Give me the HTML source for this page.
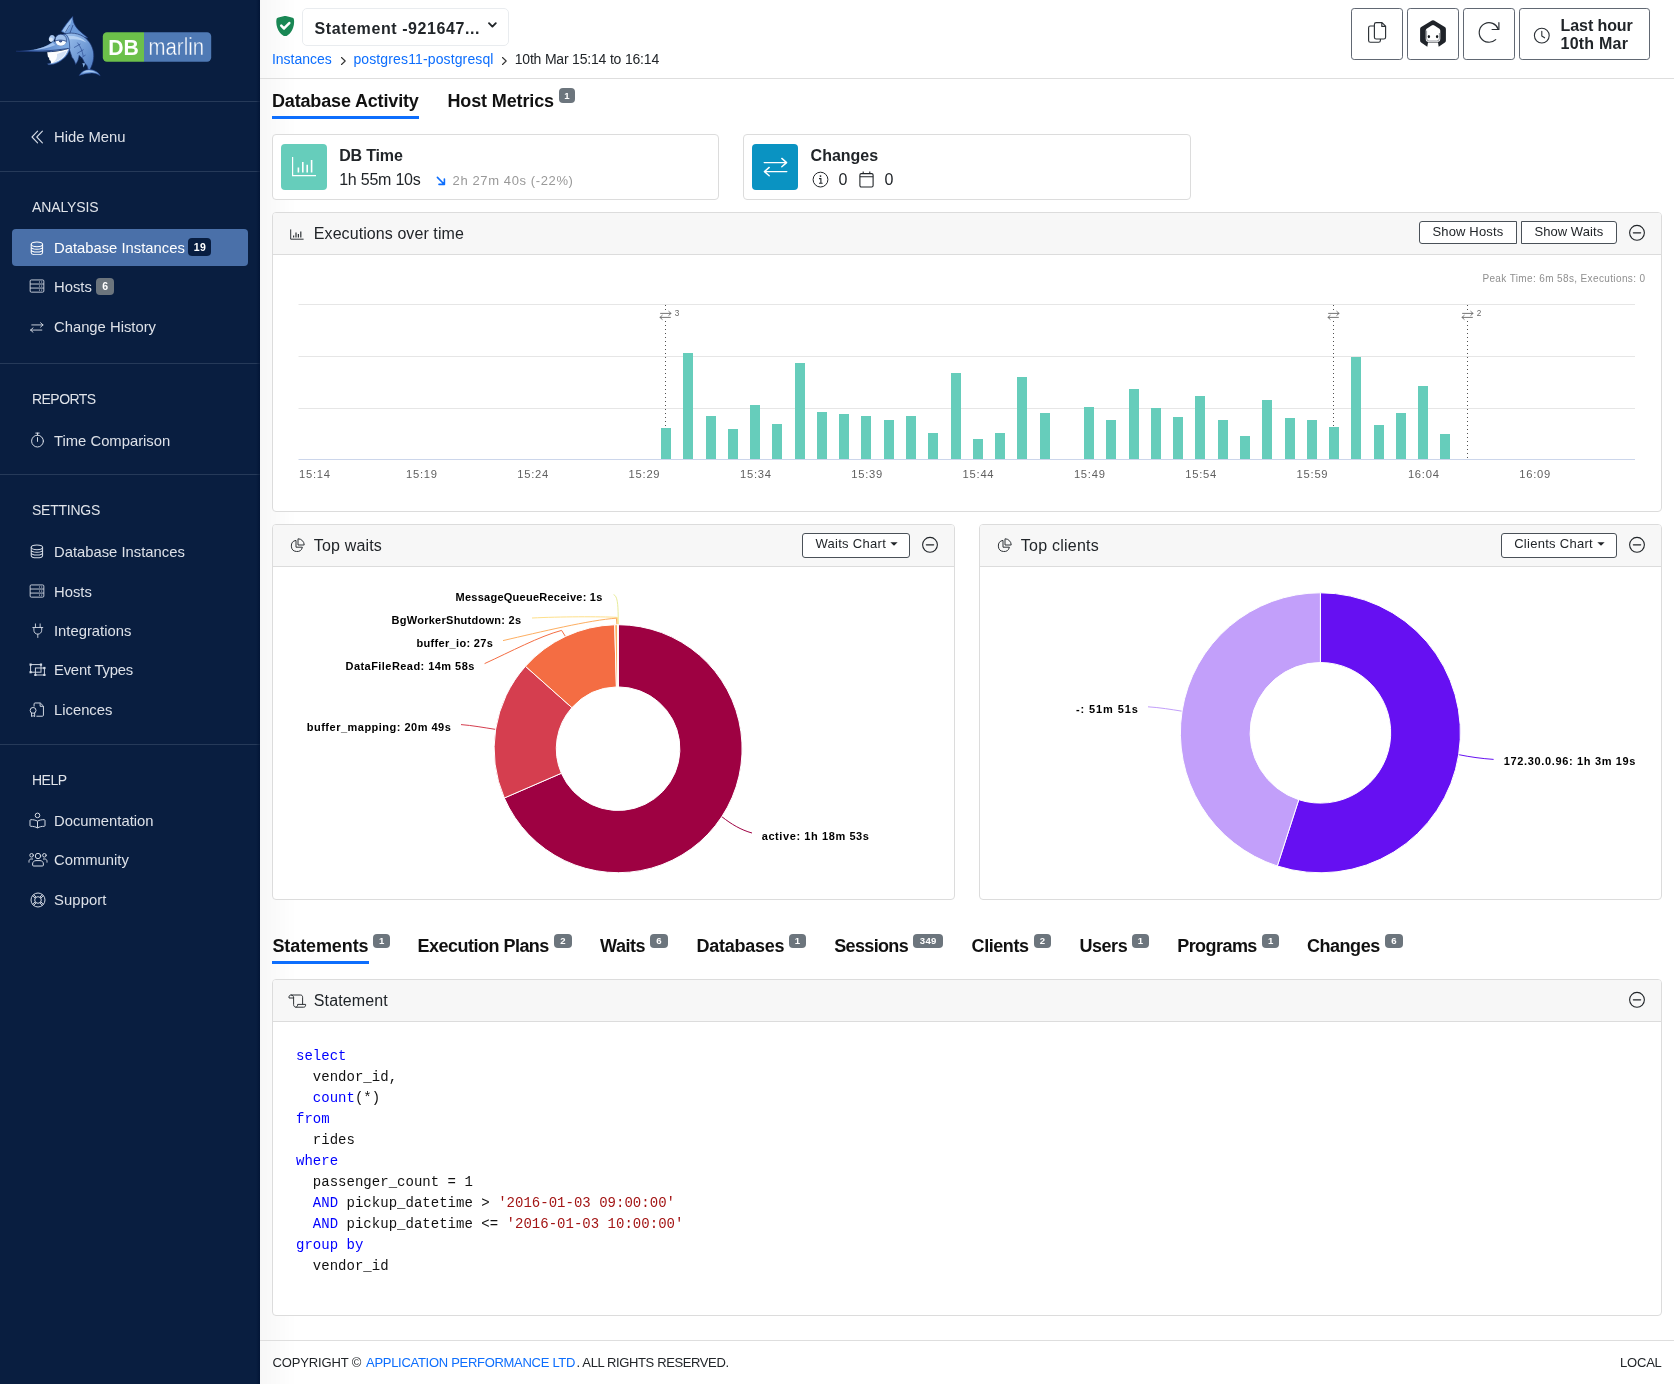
<!DOCTYPE html>
<html lang="en">
<head>
<meta charset="utf-8">
<title>DBmarlin - Statement</title>
<style>
*{box-sizing:border-box;margin:0;padding:0}
html,body{width:1674px;height:1384px;overflow:hidden;background:#fff}
body{font-family:"Liberation Sans",sans-serif;color:#212529;position:relative;-webkit-font-smoothing:antialiased}
.abs{position:absolute}
.t{position:absolute;white-space:nowrap;line-height:1}
/* sidebar */
#side{will-change:transform;position:absolute;left:0;top:0;width:260px;height:1384px;background:#091e40}
.sdiv{position:absolute;left:0;width:260px;height:1px;background:#263a59}
.sh{position:absolute;left:32px;color:#e0e4ea;font-size:14.5px;line-height:1;white-space:nowrap}
.si{position:absolute;left:54px;color:#dde1e8;font-size:15px;line-height:1;white-space:nowrap}
.sic{position:absolute;left:29px;width:17px;height:17px}
.sic svg{display:block;width:100%;height:100%;overflow:visible}
#active{position:absolute;left:12px;top:229px;width:236px;height:37px;background:#4a70a9;border-radius:4px}
.sbadge{position:absolute;height:17px;border-radius:4px;color:#fff;font-size:10.5px;letter-spacing:.4px;text-indent:.4px;font-weight:bold;line-height:17px;text-align:center}
/* main */
#main{will-change:transform;position:absolute;left:0;top:0;width:1674px;height:1384px}
.hline{position:absolute;height:1px;background:#dedede}
.panel{position:absolute;border:1px solid #dcdcdc;border-radius:4px;background:#fff}
.phead{position:absolute;left:0;top:0;right:0;height:42px;background:#f7f7f7;border-bottom:1px solid #dcdcdc;border-radius:3px 3px 0 0}
.ptitle{position:absolute;left:41px;top:13px;font-size:16px;line-height:1;color:#212529;white-space:nowrap}
.btn{position:absolute;border:1px solid #4a5158;border-radius:3px;background:#fff;color:#212529;font-size:13px;line-height:1;text-align:center;white-space:nowrap}
.tab{position:absolute;font-weight:bold;font-size:18px;line-height:1;color:#111;white-space:nowrap}
.badge{position:absolute;height:12px;border-radius:4px;background:#6c757d;color:#fff;font-size:9.6px;letter-spacing:.3px;text-indent:.3px;font-weight:bold;line-height:12px;text-align:center}
.ul{position:absolute;height:3px;background:#0d6efd}
.hbtn{position:absolute;top:8px;height:52px;border:1px solid #616873;border-radius:3.2px;background:#fff}
.ax{position:absolute;font-size:11.2px;color:#5f5f5f;line-height:1;white-space:nowrap;letter-spacing:.75px}
.pl{position:absolute;font-size:11px;font-weight:bold;color:#000;line-height:1;white-space:nowrap;letter-spacing:.35px}
pre{position:absolute;left:296px;top:1045.7px;letter-spacing:.02px;font-family:"Liberation Mono",monospace;font-size:14px;line-height:21px;color:#111}
.k{color:#0000ff}.s{color:#a31515}
</style>
</head>
<body>
<!-- ============ SIDEBAR ============ -->
<div id="side">
  <div class="sdiv" style="top:101px"></div>
  <div class="sdiv" style="top:171px"></div>
  <div class="sdiv" style="top:363px"></div>
  <div class="sdiv" style="top:474px"></div>
  <div class="sdiv" style="top:744px"></div>
  <div class="abs" style="left:256px;top:0;width:4px;height:1384px;background:linear-gradient(to right,rgba(0,20,52,0),rgba(0,18,50,.7))"></div>
  <div id="active"></div>
  <svg class="abs" style="left:0;top:0" width="260" height="100" viewBox="0 0 260 100">
  <defs>
    <linearGradient id="fg" x1="0" y1="0" x2="1" y2="1"><stop offset="0" stop-color="#9dc1ee"/><stop offset="1" stop-color="#4d7cc2"/></linearGradient>
    <linearGradient id="bg1" x1="0" y1="0" x2="1" y2="0"><stop offset="0" stop-color="#1c3478"/><stop offset=".35" stop-color="#4d78bf"/><stop offset="1" stop-color="#86b0e6"/></linearGradient>
  </defs>
  <!-- dorsal fin -->
  <path d="M61 31.5 C64.5 26 68.5 20.5 72.8 16.2 C72.6 21 74.4 25.4 78 29.4 C81.4 32.6 85 35.2 88 38 L70 36 Z" fill="#6c9ad9" stroke="#1a3370" stroke-width=".7" stroke-linejoin="round"/>
  <path d="M62.6 30.6 C65.6 26 68.8 21.6 72 18.4 L69.4 27.6 L65.4 33 Z" fill="#9cc0ee"/>
  <path d="M69.8 24.8 L65.2 32.6 M73 25 L69.8 33.4" stroke="#1a3370" stroke-width=".6" fill="none"/>
  <!-- body -->
  <path d="M65 34 C73 31.6 82.6 34.2 88 40.4 C92.6 45.6 94.4 52.6 93.6 58.6 C93 63.4 91.4 67 90 69.6 L88 69.4 C87.6 66.4 86.6 64.6 84.8 63.4 L82.6 58.8 L79.2 55.4 C78.8 58.8 77.6 62 75.6 64.4 C74.8 61.4 73.6 59 72 57.4 L69 48.4 Z" fill="url(#fg)" stroke="#1a3370" stroke-width=".7" stroke-linejoin="round"/>
  <path d="M68 36.2 C75 35 82.4 37.4 86.6 42.6 C82 40 76 38.8 70 39.4 Z" fill="#b4d0f2"/>
  <path d="M77.4 42.6 C80.4 46.4 82.4 51 83.2 56 M74 47.6 L80.4 44 M77.2 53.4 L83.6 49.6 M80.4 58.4 L85.6 55" stroke="#24418a" stroke-width=".6" fill="none"/>
  <path d="M82.4 63 L83.6 67.4 L85.2 63.6 Z" fill="#86b0e6"/>
  <!-- tail -->
  <path d="M79.2 75.4 C81.6 71.6 85.4 69.4 89.6 69.6 C94.6 69.8 98.6 72.4 100.2 75.8 C97 73.6 93.6 72.8 90.4 73.2 C86.4 73.4 82.6 74.2 79.2 75.4 Z" fill="#6f9dd9" stroke="#24418a" stroke-width=".5" stroke-linejoin="round"/>
  <path d="M82.4 72.8 C84.6 71 87.2 70.2 89.8 70.4 C92.6 70.6 95 71.6 96.8 73 C93.6 71.8 90.6 71.8 87.6 72.2 Z" fill="#a6c6ef"/>
  <!-- head -->
  <path d="M55 41 C57 36.6 61 34 65.4 34.2 C68 35.8 69.6 40.4 69.6 46 C70.6 51 66.6 58 58 62.6 C54.6 64.2 51 65 48.4 64.8 L47.4 63.8 C55 62.6 62.6 57.8 66.6 52.4 L67.8 48.4 L50 52 Z" fill="#7ca8e1" stroke="#1a3370" stroke-width=".6" stroke-linejoin="round"/>
  <!-- bill -->
  <path d="M16 51.2 C24 50.9 34 50.3 42 47.6 C46.4 46 50 43.6 53.6 41 L57.4 44.6 L68.6 48.4 C60 51 40 52.4 16 51.2 Z" fill="url(#bg1)"/>
  <path d="M33 49.8 C40 48.6 46.8 46.4 52.8 42.8 L55.4 45 C48.6 48 41 49.6 33 49.8 Z" fill="#a3c3ee"/>
  <path d="M16 51.2 C34 51.8 52 51.2 68.8 48.4" stroke="#1a3370" stroke-width=".8" fill="none"/>
  <!-- teeth -->
  <path d="M47.2 52.3 C54.6 52.2 62 51 68.4 49 C67 54 63.4 58.4 58 61 C55.6 62.2 53.2 63 51.2 63.4 L50.6 60.8 L49.4 60 L49 57.6 L48 57.2 Z" fill="#fdfeff"/>
  <path d="M57 54 L66.8 50.4 C65.6 53.8 63.4 56.8 60.4 59 C58 60.6 55.4 61.8 53 62.6 C56 60.4 57.6 57.6 57 54 Z" fill="#d4e2f5"/>
  <!-- far eye -->
  <ellipse cx="51.8" cy="38.4" rx="2.8" ry="3.4" fill="#a7c5ee" transform="rotate(24 51.8 38.4)"/>
  <ellipse cx="51" cy="39.6" rx="1.9" ry="2" fill="#dbe8f8" transform="rotate(24 51 39.6)"/>
  <!-- near eye -->
  <circle cx="60.8" cy="39.9" r="5.7" fill="#9fc0ec" stroke="#1a3370" stroke-width=".6"/>
  <path d="M55.4 41.4 C57.6 40.4 64 40.6 66.2 41.8 C65.6 44.4 63.4 45.8 60.8 45.8 C58.2 45.8 56 44.2 55.4 41.4 Z" fill="#fbfdff"/>
  <path d="M55.2 41 C58.6 39.6 63.2 39.8 66.4 41.4" stroke="#1a3370" stroke-width=".7" fill="none"/>
  <ellipse cx="60.6" cy="41.3" rx="1.6" ry="1.1" fill="#22397a"/>
  <circle cx="60.9" cy="41.1" r=".45" fill="#dbe8f8"/>
  <!-- boxes -->
  <path d="M107 32.3 H144 V61.7 H107 A4.2 4.2 0 0 1 102.8 57.5 V36.5 A4.2 4.2 0 0 1 107 32.3 Z" fill="#6cc04a"/>
  <path d="M144 32.3 H207 A4.2 4.2 0 0 1 211.2 36.5 V57.5 A4.2 4.2 0 0 1 207 61.7 H144 Z" fill="#4f7ab5"/>
  <text x="108.2" y="55.2" font-family="Liberation Sans, sans-serif" font-weight="bold" font-size="22.8" fill="#fff" textLength="30.6" lengthAdjust="spacingAndGlyphs">DB</text>
  <text x="148.6" y="55.2" font-family="Liberation Sans, sans-serif" font-size="23.5" fill="#fff" stroke="#4f7ab5" stroke-width=".4" textLength="55.4" lengthAdjust="spacingAndGlyphs">marlin</text>
</svg>

  <!-- Hide Menu -->
<svg class="abs" style="left:31px;top:130px" width="13" height="14" viewBox="0 0 13 14" fill="none" stroke="#d5dbe5" stroke-width="1.1" stroke-linecap="round" stroke-linejoin="round"><path d="M6.6 1.2 L1 7 L6.6 12.8 M11.4 1.2 L5.8 7 L11.4 12.8"/></svg>
<div class="si" style="top:130.1px;font-size:14.8px">Hide Menu</div>
<div class="sh" style="top:200.4px;font-size:14px;letter-spacing:-.13px">ANALYSIS</div>
<!-- Database Instances (active) -->
<svg class="abs" style="left:30.4px;top:240.6px" width="13.8" height="14.7" viewBox="0 0 15 16" fill="none" stroke="#fff" stroke-width="1.1"><ellipse cx="7.5" cy="3.6" rx="6.2" ry="2.6"/><path d="M1.3 3.6 V12.4 C1.3 13.9 4.1 15 7.5 15 C10.9 15 13.7 13.9 13.7 12.4 V3.6 M1.3 6.6 C1.3 8 4.1 9.1 7.5 9.1 C10.9 9.1 13.7 8 13.7 6.6 M1.3 9.5 C1.3 10.9 4.1 12 7.5 12 C10.9 12 13.7 10.9 13.7 9.5"/></svg>
<div class="si" style="top:241.1px;font-size:14.8px;color:#fff">Database Instances</div>
<div class="sbadge" style="left:188.4px;top:238.3px;width:22.6px;height:17.6px;line-height:18.4px;background:#081d40">19</div>
<!-- Hosts -->
<svg class="abs" style="left:29.3px;top:279.4px" width="16" height="14.1" viewBox="0 0 17 15" fill="none" stroke="#d5dbe5" stroke-width="0.95"><rect x="1.2" y="1" width="14.6" height="13" rx="1.2"/><path d="M1.2 5.35 H15.8 M1.2 9.65 H15.8"/><path d="M10.6 3.2 h1.1 M12.9 3.2 h1.1 M10.6 7.5 h1.1 M12.9 7.5 h1.1 M10.6 11.8 h1.1 M12.9 11.8 h1.1" stroke-width="1"/></svg>
<div class="si" style="top:280.3px;font-size:14.8px">Hosts</div>
<div class="sbadge" style="left:96.2px;top:278.2px;width:17.9px;height:17px;line-height:17.8px;background:#6c757d">6</div>
<!-- Change History -->
<svg class="abs" style="left:29.4px;top:322.2px" width="15.6" height="11" viewBox="0 0 17 12" fill="none" stroke="#d5dbe5" stroke-width="1" stroke-linecap="round" stroke-linejoin="round"><path d="M3 3.2 H15.3 M12.6 0.8 L15.3 3.2 L12.6 5.6 M14 8.8 H1.7 M4.4 6.4 L1.7 8.8 L4.4 11.2"/></svg>
<div class="si" style="top:320.1px;font-size:14.8px">Change History</div>
<div class="sh" style="top:392.3px;font-size:14px;letter-spacing:-.55px">REPORTS</div>
<!-- Time Comparison -->
<svg class="abs" style="left:30px;top:432px" width="15" height="16" viewBox="0 0 15 16" fill="none" stroke="#d5dbe5" stroke-width="1" stroke-linecap="round"><circle cx="7.5" cy="9.1" r="5.9"/><path d="M7.5 5.6 V9.4 M5.8 1.1 H9.2 M7.5 1.1 V3.2"/></svg>
<div class="si" style="top:433.6px;font-size:14.8px">Time Comparison</div>
<div class="sh" style="top:503.4px;font-size:14px;letter-spacing:-.25px">SETTINGS</div>
<!-- Settings: Database Instances -->
<svg class="abs" style="left:30.4px;top:544.1px" width="13.8" height="14.7" viewBox="0 0 15 16" fill="none" stroke="#d5dbe5" stroke-width="1.1"><ellipse cx="7.5" cy="3.6" rx="6.2" ry="2.6"/><path d="M1.3 3.6 V12.4 C1.3 13.9 4.1 15 7.5 15 C10.9 15 13.7 13.9 13.7 12.4 V3.6 M1.3 6.6 C1.3 8 4.1 9.1 7.5 9.1 C10.9 9.1 13.7 8 13.7 6.6 M1.3 9.5 C1.3 10.9 4.1 12 7.5 12 C10.9 12 13.7 10.9 13.7 9.5"/></svg>
<div class="si" style="top:544.9px;font-size:14.8px">Database Instances</div>
<!-- Settings: Hosts -->
<svg class="abs" style="left:29.3px;top:584px" width="16" height="14.1" viewBox="0 0 17 15" fill="none" stroke="#d5dbe5" stroke-width="0.95"><rect x="1.2" y="1" width="14.6" height="13" rx="1.2"/><path d="M1.2 5.35 H15.8 M1.2 9.65 H15.8"/><path d="M10.6 3.2 h1.1 M12.9 3.2 h1.1 M10.6 7.5 h1.1 M12.9 7.5 h1.1 M10.6 11.8 h1.1 M12.9 11.8 h1.1" stroke-width="1"/></svg>
<div class="si" style="top:584.8px;font-size:14.8px">Hosts</div>
<!-- Integrations -->
<svg class="abs" style="left:30.6px;top:622.8px" width="13.6" height="15.4" viewBox="0 0 15 17" fill="none" stroke="#d5dbe5" stroke-width="1" stroke-linecap="round"><path d="M4.9 1 V4.8 M10.1 1 V4.8 M2 5 H13 M3.2 5.2 V8 C3.2 10.6 5.1 12.3 7.5 12.3 C9.9 12.3 11.8 10.6 11.8 8 V5.2 M7.5 12.4 V16"/></svg>
<div class="si" style="top:623.5px;font-size:14.8px;letter-spacing:0">Integrations</div>
<!-- Event Types -->
<svg class="abs" style="left:28.6px;top:662.6px" width="17" height="13.6" viewBox="0 0 17 13.6" fill="none" stroke="#d5dbe5" stroke-width="0.95"><rect x="1.6" y="1.6" width="10.4" height="7.6"/><rect x="6.4" y="5" width="9" height="7"/><g fill="#d5dbe5" stroke="none"><rect x="0.5" y="0.5" width="2.2" height="2.2"/><rect x="10.9" y="0.5" width="2.2" height="2.2"/><rect x="0.5" y="8.1" width="2.2" height="2.2"/><rect x="14.3" y="3.9" width="2.2" height="2.2"/><rect x="14.3" y="10.9" width="2.2" height="2.2"/><rect x="5.3" y="10.9" width="2.2" height="2.2"/></g></svg>
<div class="si" style="top:662.5px;font-size:14.8px;letter-spacing:-.2px">Event Types</div>
<!-- Licences -->
<svg class="abs" style="left:29.4px;top:701.6px" width="15.6" height="15.6" viewBox="0 0 16 16" fill="none" stroke="#d5dbe5" stroke-width="1" stroke-linejoin="round"><path d="M5.2 4.6 V2 C5.2 1.4 5.6 1 6.2 1 H11.6 L14.8 4.2 V13.6 C14.8 14.2 14.4 14.6 13.8 14.6 H7.6 M11.4 1.2 V4.4 H14.6"/><circle cx="4.2" cy="8.6" r="3"/><path d="M2.6 11.2 V15 L4.2 14 L5.8 15 V11.2"/></svg>
<div class="si" style="top:702.9px;font-size:14.8px">Licences</div>
<div class="sh" style="top:772.5px;font-size:14px;letter-spacing:-.5px">HELP</div>
<!-- Documentation -->
<svg class="abs" style="left:29px;top:811.5px" width="17" height="17" viewBox="0 0 17 17" fill="none" stroke="#d5dbe5" stroke-width="1" stroke-linejoin="round"><circle cx="8.5" cy="3.4" r="2.3"/><path d="M8.5 9.2 C6.6 8 4 7.6 1.8 7.7 C1.3 7.7 1 8 1 8.5 V13.6 C1 14 1.3 14.3 1.8 14.3 C4.2 14.3 6.6 14.8 8.5 15.9 C10.4 14.8 12.8 14.3 15.2 14.3 C15.7 14.3 16 14 16 13.6 V8.5 C16 8 15.7 7.7 15.2 7.7 C13 7.6 10.4 8 8.5 9.2 Z M8.5 9.2 V15.8"/></svg>
<div class="si" style="top:813.7px;font-size:14.8px;letter-spacing:0">Documentation</div>
<!-- Community -->
<svg class="abs" style="left:27.5px;top:852px" width="20" height="15" viewBox="0 0 20 15" fill="none" stroke="#d5dbe5" stroke-width="1" stroke-linejoin="round" stroke-linecap="round"><circle cx="10" cy="4" r="2.7"/><circle cx="3.6" cy="3.3" r="1.8"/><circle cx="16.4" cy="3.3" r="1.8"/><path d="M5.4 14 C4.9 14 4.6 13.7 4.6 13.2 V12 C4.6 10 6 8.6 8 8.6 H12 C14 8.6 15.4 10 15.4 12 V13.2 C15.4 13.7 15.1 14 14.6 14 Z M1 10.2 V9.2 C1 7.9 1.9 7 3.2 7 H4.6 M19 10.2 V9.2 C19 7.9 18.1 7 16.8 7 H15.4"/></svg>
<div class="si" style="top:852.9px;font-size:14.8px">Community</div>
<!-- Support -->
<svg class="abs" style="left:29.5px;top:891.5px" width="16" height="16" viewBox="0 0 16 16" fill="none" stroke="#d5dbe5" stroke-width="1"><circle cx="8" cy="8" r="7"/><circle cx="8" cy="8" r="3.3"/><path d="M2.6 3.9 L5.3 6.1 M3.9 2.6 L6.1 5.3 M13.4 3.9 L10.7 6.1 M12.1 2.6 L9.9 5.3 M2.6 12.1 L5.3 9.9 M3.9 13.4 L6.1 10.7 M13.4 12.1 L10.7 9.9 M12.1 13.4 L9.9 10.7"/></svg>
<div class="si" style="top:892.8px;font-size:14.8px;letter-spacing:.1px">Support</div>

</div>
<!-- ============ MAIN ============ -->
<div id="main">
<div class="abs" style="left:260px;top:0;width:36px;height:1384px;background:linear-gradient(to right,rgba(0,0,0,.032),rgba(0,0,0,0))"></div>
<!-- shield -->
<svg class="abs" style="left:274.6px;top:15.7px" width="20.4" height="20.4" viewBox="0 0 16 16"><path fill="#198754" d="M8 0c-.69 0-1.843.265-2.928.56-1.11.3-2.229.655-2.887.87a1.54 1.54 0 0 0-1.044 1.262c-.596 4.477.787 7.795 2.465 9.99a11.777 11.777 0 0 0 2.517 2.453c.386.273.744.482 1.048.625.28.132.581.24.829.24s.548-.108.829-.24a7.159 7.159 0 0 0 1.048-.625 11.775 11.775 0 0 0 2.517-2.453c1.678-2.195 3.061-5.513 2.465-9.99a1.541 1.541 0 0 0-1.044-1.263 62.467 62.467 0 0 0-2.887-.87C9.843.266 8.69 0 8 0z"/><path d="M4.9 7.6 L7.1 9.8 L11.2 5.5" fill="none" stroke="#fff" stroke-width="2" stroke-linecap="round" stroke-linejoin="round"/></svg>
<!-- statement dropdown -->
<div class="abs" style="left:301.6px;top:8px;width:207px;height:37.6px;border:1px solid #e9ecef;border-radius:5px"></div>
<div class="t" style="left:314.6px;top:20.8px;font-size:16px;font-weight:bold;letter-spacing:.58px;color:#212529">Statement -921647...</div>
<svg class="abs" style="left:486.5px;top:21px" width="11" height="9" viewBox="0 0 11 9" fill="none" stroke="#212529" stroke-width="1.9" stroke-linecap="round" stroke-linejoin="round"><path d="M2 2.2 L5.4 5.6 L8.8 2.2"/></svg>
<!-- breadcrumb -->
<div class="t" style="left:272px;top:52.1px;font-size:14px;color:#0d6efd;letter-spacing:-.03px">Instances</div>
<svg class="abs" style="left:339.5px;top:55.5px" width="7" height="10" viewBox="0 0 7 10" fill="none" stroke="#333" stroke-width="1.1" stroke-linecap="round" stroke-linejoin="round"><path d="M1.5 1.5 L5.2 5 L1.5 8.5"/></svg>
<div class="t" style="left:353.4px;top:52.1px;font-size:14px;color:#0d6efd;letter-spacing:.13px">postgres11-postgresql</div>
<svg class="abs" style="left:500.8px;top:55.5px" width="7" height="10" viewBox="0 0 7 10" fill="none" stroke="#333" stroke-width="1.1" stroke-linecap="round" stroke-linejoin="round"><path d="M1.5 1.5 L5.2 5 L1.5 8.5"/></svg>
<div class="t" style="left:514.7px;top:52.1px;font-size:14px;color:#212529;letter-spacing:-.19px">10th Mar 15:14 to 16:14</div>
<!-- header buttons -->
<div class="hbtn" style="left:1351px;width:52px"></div>
<div class="hbtn" style="left:1407px;width:52px"></div>
<div class="hbtn" style="left:1463px;width:52px"></div>
<div class="hbtn" style="left:1519px;width:131px"></div>
<!-- copy icon -->
<svg class="abs" style="left:1367px;top:21px" width="20" height="23" viewBox="0 0 20 23" fill="none" stroke="#2b3035" stroke-width="1.15" stroke-linejoin="round"><path d="M7.4 5 H3.4 C2.4 5 1.6 5.8 1.6 6.8 V19.4 C1.6 20.4 2.4 21.2 3.4 21.2 H11.6 C12.6 21.2 13.4 20.4 13.4 19.4 V18"/><path d="M9.2 1.6 H15 L18.6 5.2 V16.2 C18.6 17.2 17.8 18 16.8 18 H9.2 C8.2 18 7.4 17.2 7.4 16.2 V3.4 C7.4 2.4 8.2 1.6 9.2 1.6 Z M14.8 1.8 V5.4 H18.4"/></svg>
<!-- robot icon -->
<svg class="abs" style="left:1419px;top:19px" width="28" height="29" viewBox="0 0 28 29"><path d="M12.9 1.5 Q14 0.9 15.1 1.5 L25.8 8 Q26.9 8.7 26.9 10 V21.4 Q26.9 22.7 25.9 23.4 L19.7 27.7 L19 23.6 H9 L8.3 27.7 L2.1 23.4 Q1.1 22.7 1.1 21.4 V10 Q1.1 8.7 2.2 8 Z" fill="#1f2329"/><path d="M12.6 6.4 Q14 5.5 15.4 6.4 L20 9.4 Q21.3 10.3 21.3 11.8 V19.8 Q21.3 23 18.1 23 H9.9 Q6.7 23 6.7 19.8 V11.8 Q6.7 10.3 8 9.4 Z" fill="#fff"/><path d="M7.6 11.6 V19.4 Q7.6 22 10.2 22 H17.8 Q20.4 22 20.4 19.4 V14" fill="none" stroke="#7d8288" stroke-width=".8"/><path d="M9.4 24.2 Q14 25.4 18.6 24.2 L18.8 25.4 H9.2 Z" fill="#fff"/><ellipse cx="9.9" cy="17.6" rx="1.15" ry="1.6" fill="#16191d"/><ellipse cx="18.1" cy="17.6" rx="1.15" ry="1.6" fill="#16191d"/></svg>
<!-- refresh icon -->
<svg class="abs" style="left:1477px;top:19.5px" width="26" height="26" viewBox="0 0 26 26" fill="none" stroke="#2b3035" stroke-width="1.2" stroke-linecap="round" stroke-linejoin="round"><path d="M21.3 9.3 A9.8 9.8 0 1 0 18.7 19.6"/><path d="M21.9 2.7 V9.5 H15.1"/></svg>
<!-- clock icon -->
<svg class="abs" style="left:1533px;top:27px" width="18" height="18" viewBox="0 0 18 18" fill="none" stroke="#2b3035" stroke-width="1.1" stroke-linecap="round" stroke-linejoin="round"><circle cx="8.8" cy="8.6" r="7.4"/><path d="M8.8 4.2 V9 L11.6 10.8"/></svg>
<div class="t" style="left:1560.6px;top:17.8px;font-size:16px;font-weight:bold;letter-spacing:-.09px;color:#212529">Last hour</div>
<div class="t" style="left:1560.6px;top:36.1px;font-size:16px;font-weight:bold;letter-spacing:.21px;color:#212529">10th Mar</div>
<div class="hline" style="left:260px;top:78px;width:1414px"></div>
<!-- tabs 1 -->
<div class="tab" style="left:272px;top:92px;letter-spacing:-.16px">Database Activity</div>
<div class="ul" style="left:272px;top:116px;width:147px"></div>
<div class="tab" style="left:447.5px;top:92px;letter-spacing:-.13px">Host Metrics</div>
<div class="badge" style="left:559.2px;top:87.8px;width:15.6px;height:15px;line-height:15.6px">1</div>

<div class="panel" style="left:272px;top:134px;width:447px;height:66px"></div>
<div class="abs" style="left:281px;top:144px;width:46px;height:46px;background:#66cdbb;border-radius:4px"></div>
<svg class="abs" style="left:291px;top:155px" width="26" height="24" viewBox="0 0 26 24" fill="none" stroke="#fff" stroke-width="1.3" stroke-linecap="butt"><path d="M1.6 2 V20.6 H25" stroke-width="1.2"/><path d="M7.4 17.6 V12.6 M11.8 17.6 V7 M16.2 17.6 V9.8 M20.6 17.6 V5" stroke-width="1.6"/></svg>
<div class="t" style="left:339.2px;top:148.3px;font-size:16px;font-weight:bold;letter-spacing:-.17px;color:#212529">DB Time</div>
<div class="t" style="left:339.2px;top:172.2px;font-size:16px;letter-spacing:-.23px;color:#212529">1h 55m 10s</div>
<svg class="abs" style="left:436px;top:176px" width="10" height="10" viewBox="0 0 10 10" fill="none" stroke="#0d6efd" stroke-width="1.6" stroke-linecap="round" stroke-linejoin="round"><path d="M1.4 1.4 L8.2 8.2 M8.4 3 V8.4 H3"/></svg>
<div class="t" style="left:452.6px;top:174px;font-size:13px;letter-spacing:.61px;color:#999">2h 27m 40s (-22%)</div>
<div class="panel" style="left:743px;top:134px;width:448px;height:66px"></div>
<div class="abs" style="left:752px;top:144px;width:46px;height:46px;background:#0a93c2;border-radius:4px"></div>
<svg class="abs" style="left:762px;top:157px" width="27" height="20" viewBox="0 0 27 20" fill="none" stroke="#fff" stroke-width="1.4" stroke-linecap="round" stroke-linejoin="round"><path d="M2.2 5.6 H24.6 M19.8 1.4 L24.6 5.6 L19.8 9.8 M24.8 14.6 H2.4 M7.2 10.4 L2.4 14.6 L7.2 18.8"/></svg>
<div class="t" style="left:810.6px;top:148.3px;font-size:16px;font-weight:bold;color:#212529">Changes</div>
<svg class="abs" style="left:811.5px;top:171px" width="17" height="17" viewBox="0 0 17 17" fill="none" stroke="#212529" stroke-width="1"><circle cx="8.5" cy="8.6" r="7.4"/><circle cx="8.5" cy="5.1" r="0.9" fill="#212529" stroke="none"/><path d="M7 7.6 H8.9 V12.2 M7 12.3 H10.6" stroke-width="1.1"/></svg>
<div class="t" style="left:838.6px;top:172.2px;font-size:16px;color:#212529">0</div>
<svg class="abs" style="left:858.5px;top:170.5px" width="15" height="17" viewBox="0 0 15 17" fill="none" stroke="#212529" stroke-width="1.1" stroke-linejoin="round"><rect x="0.9" y="2.6" width="13.2" height="13.4" rx="1.4"/><path d="M0.9 5.8 H14.1 M4.2 0.4 V2.8 M10.8 0.4 V2.8"/></svg>
<div class="t" style="left:884.4px;top:172.2px;font-size:16px;color:#212529">0</div>

<div class="panel" style="left:272px;top:212px;width:1390px;height:300px"><div class="phead"></div></div>
<svg class="abs" style="left:290px;top:229px" width="14" height="11" viewBox="0 0 14 11" fill="none" stroke="#2e3236" stroke-width="1"><path d="M0.7 0.4 V10.2 H13.6" stroke-width="1"/><path d="M3.6 8.6 V6.4 M6 8.6 V3.4 M8.4 8.6 V5 M10.8 8.6 V2.4" stroke-width="1.2"/></svg>
<div class="t" style="left:313.8px;top:226.3px;font-size:16px;letter-spacing:.08px;color:#212529">Executions over time</div>
<div class="btn" style="left:1419px;top:221px;width:98px;height:23px;border-radius:3px 0 0 3px"></div>
<div class="t" style="left:1432.4px;top:225px;font-size:13px;letter-spacing:.17px;color:#212529">Show Hosts</div>
<div class="btn" style="left:1521px;top:221px;width:96px;height:23px;border-radius:0 3px 3px 0"></div>
<div class="t" style="left:1534.4px;top:225px;font-size:13px;letter-spacing:.07px;color:#212529">Show Waits</div>
<svg class="abs" style="left:1628px;top:224px" width="18" height="18" viewBox="0 0 18 18" fill="none" stroke="#212529" stroke-width="1.1" stroke-linecap="round"><circle cx="9" cy="8.8" r="7.4"/><path d="M5.4 8.8 H12.6" stroke-width="1.3"/></svg>
<div class="t" style="left:1482.4px;top:274.3px;font-size:10px;letter-spacing:.37px;color:#8f8f8f">Peak Time: 6m 58s, Executions: 0</div>
<svg class="abs" style="left:272px;top:290px" width="1390" height="200" viewBox="272 290 1390 200"><path d="M298.5 304.5 H1635" stroke="#e6e6e6" stroke-width="1"/><path d="M298.5 356.5 H1635" stroke="#e6e6e6" stroke-width="1"/><path d="M298.5 408.5 H1635" stroke="#e6e6e6" stroke-width="1"/><path d="M665.5 305 V459" stroke="#505050" stroke-width="1" stroke-dasharray="1 3"/><path d="M1333.5 305 V459" stroke="#505050" stroke-width="1" stroke-dasharray="1 3"/><path d="M1467.5 305 V459" stroke="#505050" stroke-width="1" stroke-dasharray="1 3"/><rect x="661" y="428" width="10" height="31" fill="#66cdbb"/><rect x="683" y="353" width="10" height="106" fill="#66cdbb"/><rect x="706" y="416" width="10" height="43" fill="#66cdbb"/><rect x="728" y="429" width="10" height="30" fill="#66cdbb"/><rect x="750" y="405" width="10" height="54" fill="#66cdbb"/><rect x="772" y="424" width="10" height="35" fill="#66cdbb"/><rect x="795" y="363" width="10" height="96" fill="#66cdbb"/><rect x="817" y="412" width="10" height="47" fill="#66cdbb"/><rect x="839" y="414" width="10" height="45" fill="#66cdbb"/><rect x="861" y="416" width="10" height="43" fill="#66cdbb"/><rect x="884" y="420" width="10" height="39" fill="#66cdbb"/><rect x="906" y="416" width="10" height="43" fill="#66cdbb"/><rect x="928" y="433" width="10" height="26" fill="#66cdbb"/><rect x="951" y="373" width="10" height="86" fill="#66cdbb"/><rect x="973" y="439" width="10" height="20" fill="#66cdbb"/><rect x="995" y="433" width="10" height="26" fill="#66cdbb"/><rect x="1017" y="377" width="10" height="82" fill="#66cdbb"/><rect x="1040" y="413" width="10" height="46" fill="#66cdbb"/><rect x="1084" y="407" width="10" height="52" fill="#66cdbb"/><rect x="1106" y="420" width="10" height="39" fill="#66cdbb"/><rect x="1129" y="389" width="10" height="70" fill="#66cdbb"/><rect x="1151" y="408" width="10" height="51" fill="#66cdbb"/><rect x="1173" y="417" width="10" height="42" fill="#66cdbb"/><rect x="1195" y="396" width="10" height="63" fill="#66cdbb"/><rect x="1218" y="420" width="10" height="39" fill="#66cdbb"/><rect x="1240" y="436" width="10" height="23" fill="#66cdbb"/><rect x="1262" y="400" width="10" height="59" fill="#66cdbb"/><rect x="1285" y="418" width="10" height="41" fill="#66cdbb"/><rect x="1307" y="420" width="10" height="39" fill="#66cdbb"/><rect x="1329" y="427" width="10" height="32" fill="#66cdbb"/><rect x="1351" y="357" width="10" height="102" fill="#66cdbb"/><rect x="1374" y="425" width="10" height="34" fill="#66cdbb"/><rect x="1396" y="413" width="10" height="46" fill="#66cdbb"/><rect x="1418" y="386" width="10" height="73" fill="#66cdbb"/><rect x="1440" y="434" width="10" height="25" fill="#66cdbb"/><path d="M298.5 459.5 H1635" stroke="#ccd6eb" stroke-width="1"/><g transform="translate(659.0 310.8)" fill="none" stroke="#6e6e6e" stroke-width=".95" stroke-linecap="round" stroke-linejoin="round"><rect x="4" y="0" width="5" height="9.4" fill="#fff" stroke="none"/><path d="M1.6 2.6 H12 M9.8 0.6 L12 2.6 L9.8 4.6 M11.4 6.6 H1 M3.2 4.6 L1 6.6 L3.2 8.6"/></g><text x="674.8" y="316" font-family="Liberation Sans, sans-serif" font-size="8.2" fill="#666">3</text><g transform="translate(1327.0 310.8)" fill="none" stroke="#6e6e6e" stroke-width=".95" stroke-linecap="round" stroke-linejoin="round"><rect x="4" y="0" width="5" height="9.4" fill="#fff" stroke="none"/><path d="M1.6 2.6 H12 M9.8 0.6 L12 2.6 L9.8 4.6 M11.4 6.6 H1 M3.2 4.6 L1 6.6 L3.2 8.6"/></g><g transform="translate(1461.0 310.8)" fill="none" stroke="#6e6e6e" stroke-width=".95" stroke-linecap="round" stroke-linejoin="round"><rect x="4" y="0" width="5" height="9.4" fill="#fff" stroke="none"/><path d="M1.6 2.6 H12 M9.8 0.6 L12 2.6 L9.8 4.6 M11.4 6.6 H1 M3.2 4.6 L1 6.6 L3.2 8.6"/></g><text x="1476.8" y="316" font-family="Liberation Sans, sans-serif" font-size="8.2" fill="#666">2</text></svg>
<div class="ax" style="left:299.0px;top:469px">15:14</div>
<div class="ax" style="left:406.0px;top:469px">15:19</div>
<div class="ax" style="left:517.3px;top:469px">15:24</div>
<div class="ax" style="left:628.6px;top:469px">15:29</div>
<div class="ax" style="left:740.0px;top:469px">15:34</div>
<div class="ax" style="left:851.3px;top:469px">15:39</div>
<div class="ax" style="left:962.6px;top:469px">15:44</div>
<div class="ax" style="left:1073.9px;top:469px">15:49</div>
<div class="ax" style="left:1185.2px;top:469px">15:54</div>
<div class="ax" style="left:1296.6px;top:469px">15:59</div>
<div class="ax" style="left:1407.9px;top:469px">16:04</div>
<div class="ax" style="left:1519.2px;top:469px">16:09</div>

<div class="panel" style="left:272px;top:524px;width:683px;height:376px"><div class="phead"></div></div>
<svg class="abs" style="left:289.5px;top:538px" width="15" height="15" viewBox="0 0 15 15" fill="none" stroke="#2e3236" stroke-width="1" stroke-linejoin="round"><path d="M6 2.4 A5.6 5.6 0 1 0 12.4 9.2 H6 Z"/><path d="M8 0.8 V7 H14.2 A6.2 6.2 0 0 0 8 0.8 Z"/></svg>
<div class="t" style="left:313.8px;top:538.2px;font-size:16px;letter-spacing:0.16px;color:#212529">Top waits</div>
<div class="btn" style="left:802px;top:533px;width:108px;height:24.6px"></div>
<div class="t" style="left:815.4px;top:537.2px;font-size:13px;letter-spacing:0.3px;color:#212529">Waits Chart</div>
<svg class="abs" style="left:890px;top:542.2px" width="8" height="4" viewBox="0 0 8 4"><path d="M0.4 0.2 H7.6 L4 3.8 Z" fill="#212529"/></svg>
<svg class="abs" style="left:921px;top:536px" width="18" height="18" viewBox="0 0 18 18" fill="none" stroke="#212529" stroke-width="1.1" stroke-linecap="round"><circle cx="9" cy="8.8" r="7.4"/><path d="M5.4 8.8 H12.6" stroke-width="1.3"/></svg>
<svg class="abs" style="left:272px;top:566px" width="683" height="334" viewBox="272 566 683 334"><g fill="none" stroke-width="1"><path d="M613.6 594.6 C617.4 596 618 604 618.2 616 L618.3 626" stroke="#e8ec9a"/><path d="M532 618 C560 616.6 600 616.4 617.4 617.4 L618 626" stroke="#fee08b"/><path d="M503 640.6 C540 632 590 620 616.4 618.2 L617 626" stroke="#fdae61"/><path d="M484.6 663.6 C510 652 540 636 561.6 630.4 L565.4 636.4" stroke="#f46d43"/><path d="M461 724.6 C472 725.4 484 727.6 495.6 729.4" stroke="#d53e4f"/><path d="M722 816.8 C731 824 741 830 752 833" stroke="#9e0142"/></g><path d="M618.10 624.70 A124 124 0 1 1 504.31 797.98 L561.39 773.26 A61.8 61.8 0 1 0 618.10 686.90 Z" fill="#9e0142" stroke="#fff" stroke-width="1" stroke-linejoin="round"/><path d="M504.31 797.98 A124 124 0 0 1 525.45 666.29 L571.92 707.63 A61.8 61.8 0 0 0 561.39 773.26 Z" fill="#d53e4f" stroke="#fff" stroke-width="1" stroke-linejoin="round"/><path d="M525.45 666.29 A124 124 0 0 1 614.72 624.75 L616.41 686.92 A61.8 61.8 0 0 0 571.92 707.63 Z" fill="#f46d43" stroke="#fff" stroke-width="1" stroke-linejoin="round"/><path d="M614.72 624.75 A124 124 0 0 1 617.76 624.70 L617.93 686.90 A61.8 61.8 0 0 0 616.41 686.92 Z" fill="#fdae61" stroke="#fff" stroke-width="1" stroke-linejoin="round"/><path d="M617.76 624.70 A124 124 0 0 1 617.99 624.70 L618.04 686.90 A61.8 61.8 0 0 0 617.93 686.90 Z" fill="#fee08b" stroke="#fff" stroke-width="1" stroke-linejoin="round"/><path d="M617.99 624.70 A124 124 0 0 1 618.10 624.70 L618.10 686.90 A61.8 61.8 0 0 0 618.04 686.90 Z" fill="#ffffbf" stroke="#fff" stroke-width="1" stroke-linejoin="round"/></svg>
<div class="pl" style="left:455.6px;top:591.9px;letter-spacing:0.25px">MessageQueueReceive: 1s</div>
<div class="pl" style="left:391.5px;top:614.8px;letter-spacing:0.27px">BgWorkerShutdown: 2s</div>
<div class="pl" style="left:416.5px;top:637.8px;letter-spacing:0.32px">buffer_io: 27s</div>
<div class="pl" style="left:345.5px;top:660.8px;letter-spacing:0.45px">DataFileRead: 14m 58s</div>
<div class="pl" style="left:306.8px;top:721.6px;letter-spacing:0.49px">buffer_mapping: 20m 49s</div>
<div class="pl" style="left:761.7px;top:831.2px;letter-spacing:0.59px">active: 1h 18m 53s</div>

<div class="panel" style="left:979px;top:524px;width:683px;height:376px"><div class="phead"></div></div>
<svg class="abs" style="left:996.5px;top:538px" width="15" height="15" viewBox="0 0 15 15" fill="none" stroke="#2e3236" stroke-width="1" stroke-linejoin="round"><path d="M6 2.4 A5.6 5.6 0 1 0 12.4 9.2 H6 Z"/><path d="M8 0.8 V7 H14.2 A6.2 6.2 0 0 0 8 0.8 Z"/></svg>
<div class="t" style="left:1020.8px;top:538.2px;font-size:16px;letter-spacing:0.24px;color:#212529">Top clients</div>
<div class="btn" style="left:1501px;top:533px;width:116px;height:24.6px"></div>
<div class="t" style="left:1514.2px;top:537.2px;font-size:13px;letter-spacing:0.28px;color:#212529">Clients Chart</div>
<svg class="abs" style="left:1597px;top:542.2px" width="8" height="4" viewBox="0 0 8 4"><path d="M0.4 0.2 H7.6 L4 3.8 Z" fill="#212529"/></svg>
<svg class="abs" style="left:1628px;top:536px" width="18" height="18" viewBox="0 0 18 18" fill="none" stroke="#212529" stroke-width="1.1" stroke-linecap="round"><circle cx="9" cy="8.8" r="7.4"/><path d="M5.4 8.8 H12.6" stroke-width="1.3"/></svg>
<svg class="abs" style="left:979px;top:566px" width="683" height="334" viewBox="979 566 683 334"><g fill="none" stroke-width="1"><path d="M1148 706.8 C1160 707.6 1171 709.4 1182 711.2" stroke="#c29ffa"/><path d="M1458.4 754.6 C1470 757 1482 758.6 1493.6 759.4" stroke="#6610f2"/></g><path d="M1320.40 592.80 A140 140 0 1 1 1277.32 866.01 L1298.77 799.69 A70.3 70.3 0 1 0 1320.40 662.50 Z" fill="#6610f2" stroke="#fff" stroke-width="1" stroke-linejoin="round"/><path d="M1277.32 866.01 A140 140 0 0 1 1320.40 592.80 L1320.40 662.50 A70.3 70.3 0 0 0 1298.77 799.69 Z" fill="#c29ffa" stroke="#fff" stroke-width="1" stroke-linejoin="round"/></svg>
<div class="pl" style="left:1076px;top:704.0px;letter-spacing:0.89px">-: 51m 51s</div>
<div class="pl" style="left:1503.8px;top:755.8px;letter-spacing:0.65px">172.30.0.96: 1h 3m 19s</div>

<div class="tab" style="left:272.4px;top:936.8px;letter-spacing:-.09px">Statements</div>
<div class="ul" style="left:272px;top:961px;width:97px"></div>
<div class="badge" style="left:373.4px;top:934px;width:16.6px;height:14.2px;line-height:14.8px">1</div>
<div class="tab" style="left:417.6px;top:936.8px;letter-spacing:-.52px">Execution Plans</div>
<div class="badge" style="left:554px;top:934px;width:18px;height:14.2px;line-height:14.8px">2</div>
<div class="tab" style="left:600px;top:936.8px;letter-spacing:-.44px">Waits</div>
<div class="badge" style="left:650.2px;top:934px;width:17.6px;height:14.2px;line-height:14.8px">6</div>
<div class="tab" style="left:696.6px;top:936.8px;letter-spacing:-.27px">Databases</div>
<div class="badge" style="left:789px;top:934px;width:16.8px;height:14.2px;line-height:14.8px">1</div>
<div class="tab" style="left:834.2px;top:936.8px;letter-spacing:-.65px">Sessions</div>
<div class="badge" style="left:913.3px;top:934px;width:29.7px;height:14.2px;line-height:14.8px">349</div>
<div class="tab" style="left:971.6px;top:936.8px;letter-spacing:-.44px">Clients</div>
<div class="badge" style="left:1033.8px;top:934px;width:17.2px;height:14.2px;line-height:14.8px">2</div>
<div class="tab" style="left:1079.4px;top:936.8px;letter-spacing:-.44px">Users</div>
<div class="badge" style="left:1132px;top:934px;width:16.7px;height:14.2px;line-height:14.8px">1</div>
<div class="tab" style="left:1177.2px;top:936.8px;letter-spacing:-.55px">Programs</div>
<div class="badge" style="left:1262.3px;top:934px;width:16.6px;height:14.2px;line-height:14.8px">1</div>
<div class="tab" style="left:1307px;top:936.8px;letter-spacing:-.47px">Changes</div>
<div class="badge" style="left:1385px;top:934px;width:17.6px;height:14.2px;line-height:14.8px">6</div>

<div class="panel" style="left:272px;top:979px;width:1390px;height:337px"><div class="phead"></div></div>
<svg class="abs" style="left:288px;top:994px" width="19" height="15" viewBox="0 0 19 15" fill="none" stroke="#2e3236" stroke-width="1" stroke-linejoin="round" stroke-linecap="round"><path d="M5.6 3.6 V10.6 C5.6 12.2 6.6 13.2 8.2 13.2 H15.6 C16.8 13.2 17.6 12.4 17.6 11.2 V10.4 H9.6 V11 C9.6 12.2 8.9 13 8 13.2"/><path d="M14.6 10.2 V3.2 C14.6 1.8 13.8 1 12.4 1 H3.2 C1.8 1 1 1.8 1 3 V4 H5.4"/><path d="M3.2 1 C4.6 1 5.6 2 5.6 3.4"/></svg>
<div class="t" style="left:313.8px;top:992.6px;font-size:16px;letter-spacing:.13px;color:#212529">Statement</div>
<svg class="abs" style="left:1628px;top:991.2px" width="18" height="18" viewBox="0 0 18 18" fill="none" stroke="#212529" stroke-width="1.1" stroke-linecap="round"><circle cx="9" cy="8.8" r="7.4"/><path d="M5.4 8.8 H12.6" stroke-width="1.3"/></svg>
<pre><span class="k">select</span>
  vendor_id,
  <span class="k">count</span>(*)
<span class="k">from</span>
  rides
<span class="k">where</span>
  passenger_count = 1
  <span class="k">AND</span> pickup_datetime &gt; <span class="s">'2016-01-03 09:00:00'</span>
  <span class="k">AND</span> pickup_datetime &lt;= <span class="s">'2016-01-03 10:00:00'</span>
<span class="k">group by</span>
  vendor_id</pre>

<div class="hline" style="left:260px;top:1340px;width:1414px"></div>
<div class="t" style="left:272.4px;top:1356.2px;font-size:13px;letter-spacing:-.13px;color:#212529">COPYRIGHT ©</div>
<div class="t" style="left:366px;top:1356.2px;font-size:13px;letter-spacing:-.29px;color:#0d6efd">APPLICATION PERFORMANCE LTD</div>
<div class="t" style="left:576.6px;top:1356.2px;font-size:13px;letter-spacing:-.38px;color:#212529">. ALL RIGHTS RESERVED.</div>
<div class="t" style="left:1620px;top:1356.2px;font-size:13px;letter-spacing:-.2px;color:#212529">LOCAL</div>

</div>
</body>
</html>
